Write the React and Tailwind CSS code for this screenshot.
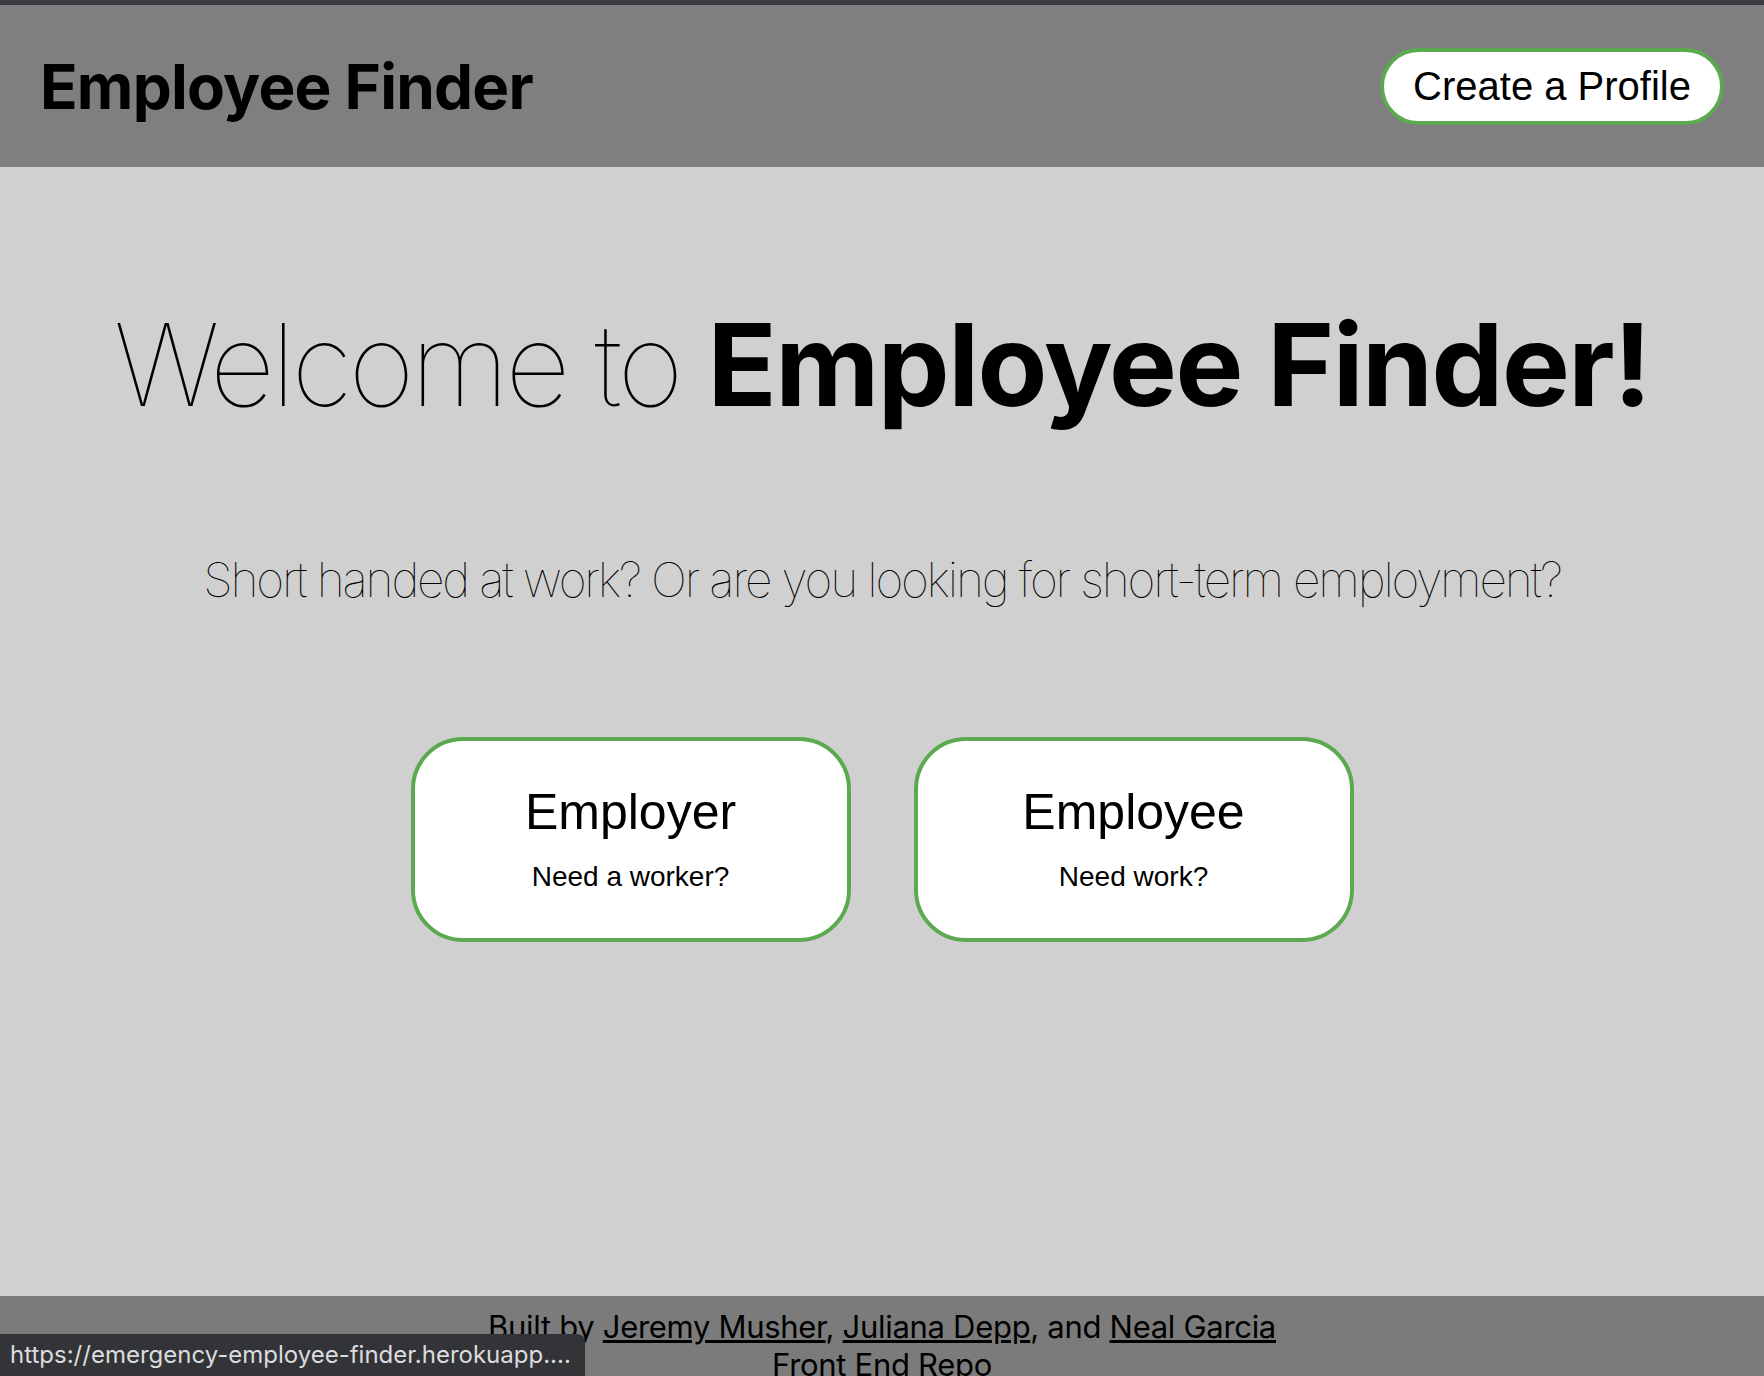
import React from 'react';

const sans = "font-['Inter','Noto_Sans',sans-serif]";
const arial = "font-['Liberation_Sans',Arial,sans-serif]";

const RoleCard = ({ title, subtitle }) => (
    <button className={`w-[440px] h-[205px] bg-white border-[4px] border-[#5caa4f] rounded-[52px] flex flex-col items-center justify-center text-black ${arial}`}>
        <span className="text-[50px] leading-none mt-[-1px]">{title}</span>
        <span className="text-[28px] leading-none mt-[26px]">{subtitle}</span>
    </button>
);

const App = () => {
    return (
        <div className="h-[1376px] w-full flex flex-col bg-[#d0d0d0] overflow-hidden relative">
            {/* window top edge */}
            <div className="h-[5px] bg-[#3a3b3f]"></div>

            <header className="h-[162px] bg-[#7f7f7f] flex items-center justify-between pl-[40px] pr-[40px]">
                <h1 className={`text-[62px] font-bold text-black tracking-[-0.8px] ${sans}`}>Employee Finder</h1>
                <button className={`h-[77px] px-[29px] bg-white border-[4px] border-[#5caa4f] rounded-full text-[40px] text-black ${arial}`}>
                    Create a Profile
                </button>
            </header>

            <main className="flex-1 flex flex-col items-center">
                <h2 className={`mt-[141px] text-[114px] leading-none text-black ${sans}`}>
                    <span className="font-thin tracking-[-4px]">Welcome to </span>
                    <span className="font-bold tracking-[-1.5px]">Employee Finder!</span>
                </h2>
                <p className={`mt-[134px] text-[48px] leading-none font-thin text-black tracking-[-2.2px] ${sans}`}>
                    Short handed at work? Or are you looking for short-term employment?
                </p>
                <div className="mt-[133px] flex gap-[63px]">
                    <RoleCard title="Employer" subtitle="Need a worker?" />
                    <RoleCard title="Employee" subtitle="Need work?" />
                </div>
            </main>

            <footer className={`h-[80px] bg-[#7b7b7b] flex flex-col items-center pt-[12px] text-[31px] leading-[38px] tracking-[-0.3px] text-black ${sans}`}>
                <div>
                    Built by <a className="underline">Jeremy Musher</a>, <a className="underline">Juliana Depp</a>, and <a className="underline">Neal Garcia</a>
                </div>
                <div>Front End Repo</div>
            </footer>

            {/* browser link status bubble */}
            <div className={`absolute left-0 bottom-0 w-[585px] h-[42px] bg-[#333438] rounded-tr-[8px] flex items-center pl-[10px] text-[24px] text-[#dcdcde] ${sans}`}>
                https://emergency-employee-finder.herokuapp....
            </div>
        </div>
    );
};

export default App;
